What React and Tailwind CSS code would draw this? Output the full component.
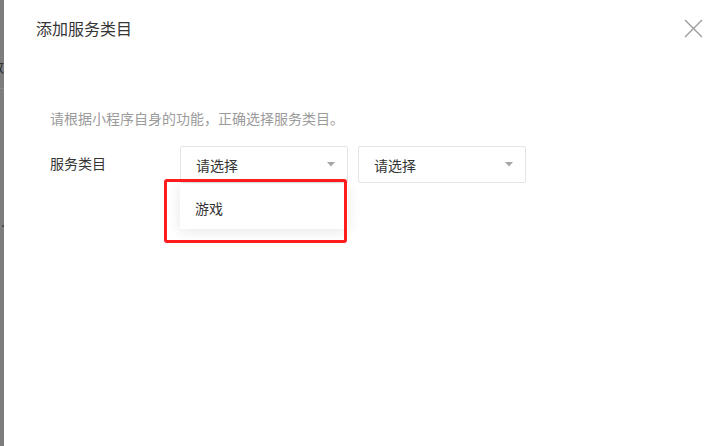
import React from 'react';

const font = { fontFamily: '"Noto Sans CJK SC", "Noto Sans", sans-serif' };

const Caret = () => (
    <svg width="8" height="5" viewBox="0 0 8 5" className="shrink-0">
        <path d="M0 0 L8 0 L4 4.5 Z" fill="#a6a6a6" />
    </svg>
);

const SelectBox = ({ children }) => (
    <div className="flex h-[37px] w-[168px] items-center justify-between rounded-[2px] border border-[#e4e4e4] bg-white pl-[15px] pr-[12px] text-[14px] leading-[20px] text-[#353535]">
        <span>{children}</span>
        <Caret />
    </div>
);

const App = () => {
    return (
        <div className="flex h-[446px] w-[708px] overflow-hidden bg-white" style={font}>

            {/* page behind the overlay */}
            <div className="relative w-[4px] shrink-0 overflow-hidden bg-[#7d7d7d]">
                <span className="absolute right-0 top-[56px] whitespace-nowrap text-[14px] leading-[20px] text-[#2e2e2e]">数</span>
                <div className="absolute left-0 top-[88px] h-px w-full bg-[#8a8a8a]" />
                <div className="absolute left-[2px] top-[225px] h-[2px] w-[2px] bg-[#4a4a4a]" />
            </div>

            {/* dialog */}
            <div className="relative flex-1 bg-white">
                <div className="pl-[32px] pt-[16px] text-[16px] leading-[24px] text-[#353535]">添加服务类目</div>

                <button className="absolute left-[679px] top-[18px] flex h-[20px] w-[20px] items-center justify-center">
                    <svg width="19" height="19" viewBox="0 0 19 19">
                        <path d="M1 1 L18 18 M18 1 L1 18" stroke="#9c9c9c" strokeWidth="1.4" fill="none" />
                    </svg>
                </button>

                <div className="pl-[46px]">
                    <p className="mt-[68px] text-[14px] leading-[20px] text-[#9b9b9b]">请根据小程序自身的功能，正确选择服务类目。</p>

                    <div className="mt-[18px] flex items-start">
                        <div className="w-[130px] pt-[7px] text-[14px] leading-[20px] text-[#353535]">服务类目</div>
                        <div className="flex gap-[10px]">
                            <div className="relative">
                                <SelectBox>请选择</SelectBox>
                                <div className="absolute left-0 top-[38px] z-10 h-[45px] w-[168px] bg-white pl-[15px] pt-[14px] text-[14px] leading-[20px] text-[#353535] shadow-[0_2px_12px_rgba(0,0,0,0.1)]">
                                    游戏
                                </div>
                            </div>
                            <SelectBox>请选择</SelectBox>
                        </div>
                    </div>
                </div>

                {/* highlight annotation */}
                <div className="pointer-events-none absolute left-[160px] top-[179px] z-20 h-[64px] w-[183px] rounded-[3px] border-[3px] border-[#fe1c1c]" />
            </div>
        </div>
    );
};

export default App;
